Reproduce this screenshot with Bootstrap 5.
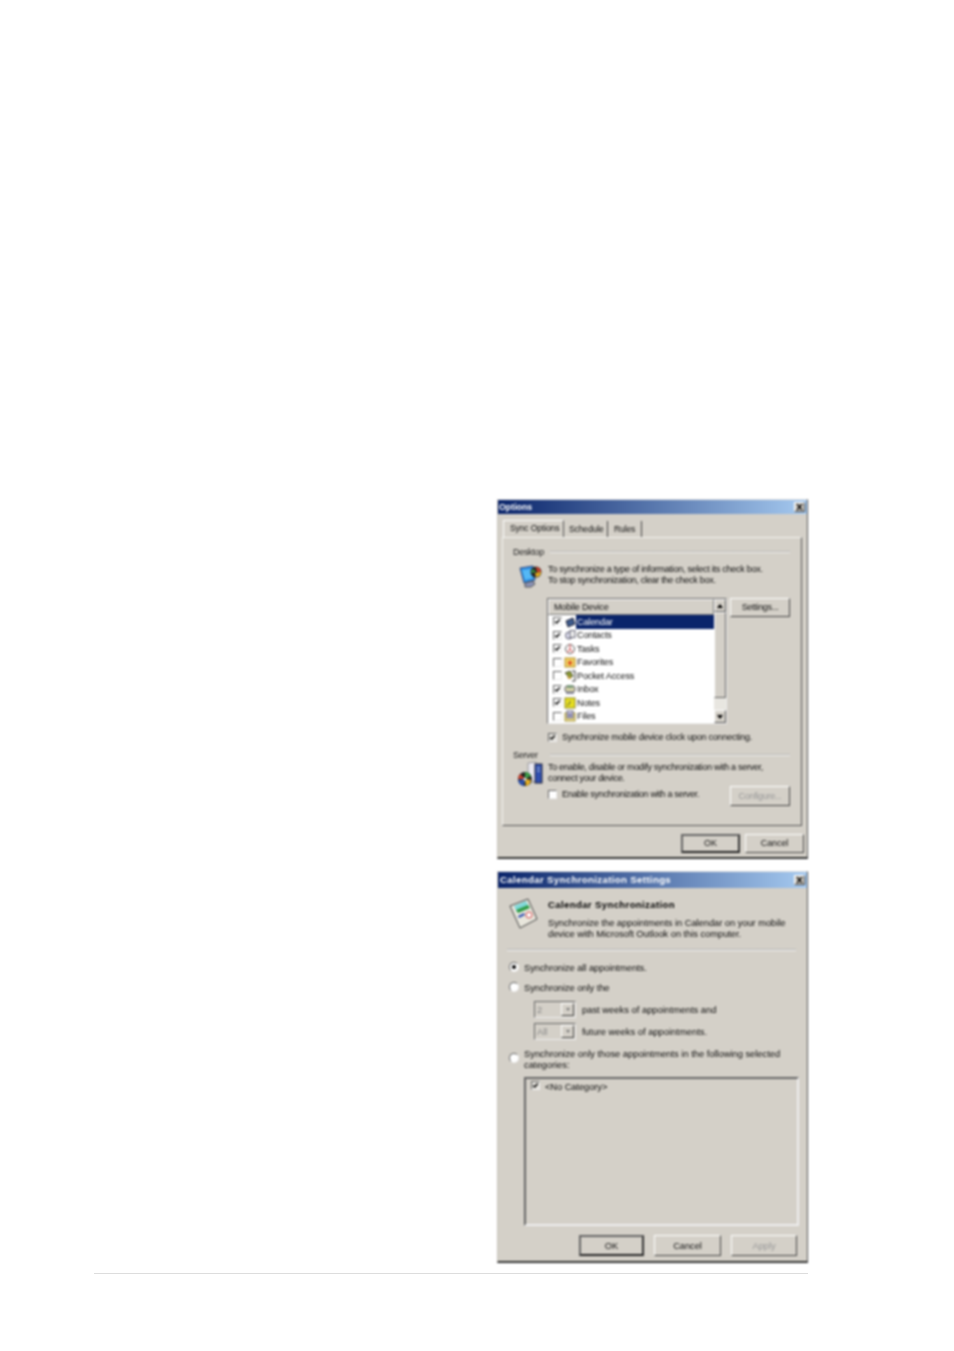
<!DOCTYPE html>
<html lang="en">
<head>
<meta charset="utf-8">
<title>Options</title>
<link href="https://cdn.jsdelivr.net/npm/bootstrap@5.3.0/dist/css/bootstrap.min.css" rel="stylesheet">
<style>
html,body{background:#fff;margin:0}
.sheet{padding:499px 0 0 94px;width:954px;height:1351px}
.dlg-stack{margin-left:403px;width:311px}
.dlg{width:311px;background:#d4d0c8;border-top:1px solid #ddd;border-left:1px solid #c8c4bc;border-right:1px solid #555;border-bottom:2px solid #333;font:9px/11px "Liberation Sans",Arial,sans-serif;color:#0c0c0c;filter:blur(.8px);overflow:hidden}
.dlg-a{height:360px}
.dlg-b{height:392px;margin-top:12px;font-size:9.4px}
.ttl{height:14px;background:linear-gradient(90deg,#0a246a,#a6caf0);color:#fff;font-weight:700;font-size:8.8px;line-height:14px;padding-left:1px;margin:0}
.dlg-b .ttl{height:16px;line-height:18px;font-size:9.6px;padding-left:2px;letter-spacing:.37px}
.xbtn{width:11px;height:10px;background:#d4d0c8;border:1px solid;border-color:#fff #444 #444 #fff;margin-right:2px;display:flex}
.xbtn svg{width:100%;height:100%}
.tabs{margin:6px 0 0 5px;height:17px;gap:1px;font-size:8.6px}
.tabx{padding:3px 4px 0;border-right:1px solid #444;letter-spacing:-.15px;height:16px;margin-top:1px;line-height:11px}
.tabx.on{height:17px;margin-top:0;padding:2px 4px 0 6px;border-right:1px solid #555;border-left:1px solid #fff;border-top:1px solid #fff;width:61px;white-space:nowrap}
.tabx.s1{width:43px}.tabx.s2{padding-left:5px;width:33px}
.panel{margin-left:4px;width:300px;height:289px;border:1px solid;border-color:#f4f4f0 #555 #555 #f4f4f0;padding-top:9px;position:relative}
.grp{height:10px;padding-left:10px;align-items:center;color:#222}
.grp span{width:37px;letter-spacing:-.3px}
.grp i{display:block;width:240px;height:2px;background:linear-gradient(#aaa 50%,#fff 50%);opacity:.7}
.intro{margin-top:7px;padding-left:14px}
.intro svg{width:26px;height:26px;flex:none;margin-top:0}
.intro p{margin:0 0 0 5px;white-space:nowrap;letter-spacing:-.25px;line-height:11px}
.listwrap{margin:8px 0 0 44px}
.lv{width:180px;height:126px;border:1px solid;border-color:#666 #eee #eee #666;background:#fff;overflow:hidden}
.lvmain{width:166px}
.lvhead{height:16px;background:#d4d0c8;border:1px solid;border-color:#fff #777 #777 #fff;padding-left:5px;line-height:14px;letter-spacing:-.15px}
.lvrow{height:13.5px;align-items:center;padding-left:5px;white-space:nowrap;letter-spacing:-.1px}
.lvrow svg{width:12px;height:12px;flex:none;margin-left:2px}
.spacer-row{padding-left:16px}
.cbx{width:9px;height:9px;flex:none;border:1px solid;border-color:#666 #eee #eee #666;background:#fff;display:block}
.cbx svg{display:block;width:100%;height:100%;margin:0}
.lbl{padding:0 1px;height:14px;line-height:14px;flex:1}
.lbl.sel{background:#0a246a;color:#fff}
.sbar{width:12px;background:#e8e6e0;position:relative}
.sbtn{height:13px;background:#d4d0c8;border:1px solid;border-color:#fff #555 #555 #fff;display:flex;align-items:center;justify-content:center;flex:none}
.thumb{height:86px;background:#d4d0c8;border:1px solid;border-color:#fff #666 #666 #fff;flex:none}
.arr{width:0;height:0;border-left:3px solid transparent;border-right:3px solid transparent}
.arr.up{border-bottom:4px solid #000}.arr.dn{border-top:4px solid #000}
.wbtn{background:#d4d0c8;border:1px solid;border-color:#fff #444 #444 #fff;display:flex;align-items:center;justify-content:center;flex:none;letter-spacing:-.1px;color:#111}
.wbtn.def{border:2px solid;border-color:#666 #333 #222 #666}
.wbtn.off{color:#999}
.setbtn{width:60px;height:19px;margin-left:3px;letter-spacing:-.3px}
.chkline{margin:9px 0 0 45px;height:9px;align-items:center;white-space:nowrap;letter-spacing:-.23px}
.chkline span{margin-left:5px}
.chkline .cbx{background:#e4e2dc}
.chkline .cbx.wh{background:#fff}
.srvgrp{margin-top:8px;height:10px}
.srvtxt{margin-top:2px}
.srvtxt p{letter-spacing:-.3px}
.srvtxt svg{margin-top:-1px}
.srvlow{margin:-1px 0 0 45px;justify-content:space-between;align-items:center;width:242px;white-space:nowrap;letter-spacing:-.31px}
.srvlow .wbtn{width:60px;height:20px;letter-spacing:-.3px}
.srvlow .lft{display:flex;align-items:center;margin-top:-3px}
.srvlow span{margin-left:5px}
.acts{justify-content:flex-end;gap:5px;margin:8px 3px 0 0}
.acts .wbtn{width:59px;height:19px}
.hdr{padding:11px 0 0 10px;height:61px}
.hdr svg{width:32px;height:34px;flex:none;margin-top:-2px}
.hdr h6{font:700 9.6px/12px "Liberation Sans",Arial,sans-serif;margin:0 0 6px;color:#000;letter-spacing:.36px}
.hdr p{margin:0;line-height:11px;white-space:nowrap;letter-spacing:-.06px}
.hdr .tx{margin-left:8px}
.sep{margin:0 0 0 9px;width:289px;height:2px;background:linear-gradient(#aaa 50%,#fff 50%);opacity:.8}
.rad{width:10px;height:10px;border-radius:50%;flex:none;background:#fff;border:1px solid;border-color:#666 #eee #eee #666;display:flex;align-items:center;justify-content:center}
.rad b{width:4px;height:4px;border-radius:50%;background:#000;display:block}
.rline{padding-left:11px;align-items:center;white-space:nowrap;letter-spacing:-.08px;height:12px}
.rline span{margin-left:5px}
.r1{margin-top:10px}.r2{margin-top:8px}
.wk{margin:8px 0 0 36px;height:17px;align-items:center;letter-spacing:0}
.wk2{margin-top:5px}
.combo{width:42px;height:17px;border:1px solid;border-color:#666 #eee #eee #666;background:#d4d0c8;align-items:center;padding-left:2px;color:#888;justify-content:space-between;margin-right:6px}
.combo em{font-style:normal}
.combo .wbtn{width:13px;height:13px;margin-right:1px}
.combo .arr{border-left-width:2.5px;border-right-width:2.5px;border-top-width:3px;border-top-color:#777}
.r3{margin-top:8px;padding-left:11px;letter-spacing:-.03px;align-items:center}
.r3 .rad{margin-top:-3px}
.r3 p{margin:0 0 0 5px;line-height:11px;width:265px}
.catbox{margin:7px 0 0 26px;width:275px;height:149px;border:2px solid;border-color:#666 #eee #eee #666;padding:2px 5px;align-items:flex-start;letter-spacing:-.1px}
.catbox .cbx{background:#e4e2dc;margin-top:1px}
.catbox span{margin-left:5px}
.acts2{gap:10px;margin:9px 10px 0 0;justify-content:flex-end}
.acts2 .wbtn{height:21px}
.acts2 .o{width:65px}.acts2 .c{width:67px}.acts2 .a{width:66px}
.foot-rule{height:1px;background:#ddd;width:714px;margin-top:10px}
</style>
</head>
<body>
<div class="sheet">
<div class="dlg-stack">
<section class="dlg dlg-a">
  <div class="ttl d-flex align-items-center justify-content-between"><span>Options</span><span class="xbtn"><svg viewBox="0 0 9 8"><path d="M2 1l5 6M7 1L2 7" stroke="#000" stroke-width="1.3"/></svg></span></div>
  <div class="tabs d-flex">
    <div class="tabx on">Sync Options</div><div class="tabx s1">Schedule</div><div class="tabx s2">Rules</div>
  </div>
  <div class="panel">
    <div class="grp d-flex"><span>Desktop</span><i></i></div>
    <div class="intro d-flex">
      <svg viewBox="0 0 26 26"><path d="M3 4l13-2 2 14-11 3z" fill="#2a8fe8" stroke="#3a4a78"/><path d="M5 6l9-1 2 9-8 2z" fill="#55b8f5"/><path d="M8 19l8-2 2 3-4 3H8z" fill="#8b93b8" stroke="#555"/><circle cx="19" cy="8" r="5.5" fill="#222"/><path d="M19 3a5 5 0 015 5h-4z" fill="#c7402d"/><path d="M24 8a5 5 0 01-5 5l-1-4z" fill="#e8b020"/><path d="M14 9a5 5 0 012-4l3 3z" fill="#3c9a46"/></svg>
      <p>To synchronize a type of information, select its check box.<br>To stop synchronization, clear the check box.</p>
    </div>
    <div class="listwrap d-flex align-items-start">
      <div class="lv d-flex">
        <div class="lvmain">
          <div class="lvhead">Mobile Device</div>
          <div class="lvrow d-flex"><span class="cbx"><svg viewBox="0 0 9 9"><path d="M1.5 4.5l2 2 4-4.5" fill="none" stroke="#000" stroke-width="1.8"/></svg></span><svg viewBox="0 0 12 12"><path d="M2 5l7-3 2 6-7 3z" fill="#3d5a8c" stroke="#223"/></svg><span class="lbl sel">Calendar</span></div>
          <div class="lvrow d-flex"><span class="cbx"><svg viewBox="0 0 9 9"><path d="M1.5 4.5l2 2 4-4.5" fill="none" stroke="#000" stroke-width="1.8"/></svg></span><svg viewBox="0 0 12 12"><circle cx="5" cy="6.5" r="3.5" fill="#dde" stroke="#556"/><rect x="6" y="1.5" width="5" height="7" fill="#eee" stroke="#667"/></svg><span class="lbl">Contacts</span></div>
          <div class="lvrow d-flex"><span class="cbx"><svg viewBox="0 0 9 9"><path d="M1.5 4.5l2 2 4-4.5" fill="none" stroke="#000" stroke-width="1.8"/></svg></span><svg viewBox="0 0 12 12"><circle cx="6" cy="6" r="4.5" fill="#fff" stroke="#555"/><path d="M6 1v5l3 4M6 6l-3 4" fill="none" stroke="#c44"/></svg><span class="lbl">Tasks</span></div>
          <div class="lvrow d-flex"><span class="cbx"></span><svg viewBox="0 0 12 12"><rect x="1" y="2" width="10" height="9" fill="#f2d060" stroke="#b09030"/><path d="M6 4l1 2h2l-2 1.500.5 2L6 8.500 4.500 9.500l.5-2L3 6h2z" fill="#d8401c"/></svg><span class="lbl">Favorites</span></div>
          <div class="lvrow d-flex"><span class="cbx"></span><svg viewBox="0 0 12 12"><path d="M8 1h3v10H8" fill="none" stroke="#333"/><path d="M1 3l5-2 3 5-3 2z" fill="#8a9a30" stroke="#554"/><path d="M3 6l4 1v2H4z" fill="#c9a040"/></svg><span class="lbl">Pocket Access</span></div>
          <div class="lvrow d-flex"><span class="cbx"><svg viewBox="0 0 9 9"><path d="M1.5 4.5l2 2 4-4.5" fill="none" stroke="#000" stroke-width="1.8"/></svg></span><svg viewBox="0 0 12 12"><rect x="1" y="3" width="10" height="6" rx="2" fill="#d8d4a8" stroke="#556"/><path d="M3 2h6v3H3z" fill="#7c9a7c"/><path d="M2 9h8v2H2z" fill="#889"/></svg><span class="lbl">Inbox</span></div>
          <div class="lvrow d-flex"><span class="cbx"><svg viewBox="0 0 9 9"><path d="M1.5 4.5l2 2 4-4.5" fill="none" stroke="#000" stroke-width="1.8"/></svg></span><svg viewBox="0 0 12 12"><rect x="1" y="1" width="10" height="10" fill="#e8e020" stroke="#8a8420"/><path d="M3 8c2 0 3-1 3-4" fill="none" stroke="#554"/></svg><span class="lbl">Notes</span></div>
          <div class="lvrow d-flex"><span class="cbx"></span><svg viewBox="0 0 12 12"><rect x="1" y="3" width="10" height="8" fill="#f0e08a" stroke="#a09040"/><rect x="3" y="1" width="6" height="7" fill="#dcd8f0" stroke="#667"/><path d="M4 4h4M4 6h4" stroke="#447"/></svg><span class="lbl">Files</span></div>
          <div class="lvrow d-flex spacer-row"><svg viewBox="0 0 12 12"><rect x="3" y="0" width="6" height="12" fill="#3c9a46"/></svg></div>
        </div>
        <div class="sbar d-flex flex-column">
          <div class="sbtn"><i class="arr up"></i></div>
          <div class="thumb"></div>
          <div class="flex-grow-1"></div>
          <div class="sbtn"><i class="arr dn"></i></div>
        </div>
      </div>
      <div class="wbtn setbtn">Settings...</div>
    </div>
    <div class="chkline d-flex"><span class="cbx m-0"><svg viewBox="0 0 9 9"><path d="M1.5 4.500l2 2 4-4.500" fill="none" stroke="#000" stroke-width="1.800"/></svg></span><span>Synchronize mobile device clock upon connecting.</span></div>
    <div class="grp d-flex srvgrp"><span>Server</span><i></i></div>
    <div class="srvtxt d-flex intro">
      <svg viewBox="0 0 26 26"><path d="M11 2l8-1v19l-8 2z" fill="#e9e8f2" stroke="#999"/><rect x="18" y="3" width="7" height="19" fill="#2f4fb0" stroke="#223"/><path d="M20 7h3M20 10h3" stroke="#bcd"/><circle cx="8" cy="18" r="7" fill="#222"/><path d="M8 11a7 7 0 016 4l-6 3z" fill="#3c9a46"/><path d="M1 18a7 7 0 012-5l5 5z" fill="#c7402d"/><path d="M8 18l6 1a7 7 0 01-5 6z" fill="#e8b020"/><path d="M8 18l-1 7a7 7 0 01-6-6z" fill="#2c50a8"/><circle cx="8" cy="18" r="1.500" fill="#eee"/></svg>
      <p>To enable, disable or modify synchronization with a server,<br>connect your device.</p>
    </div>
    <div class="srvlow d-flex">
      <div class="lft"><span class="cbx wh m-0"></span><span>Enable synchronization with a server.</span></div>
      <div class="wbtn off">Configure...</div>
    </div>
  </div>
  <div class="acts d-flex"><div class="wbtn def">OK</div><div class="wbtn">Cancel</div></div>
</section>

<section class="dlg dlg-b">
  <div class="ttl d-flex align-items-center justify-content-between"><span>Calendar Synchronization Settings</span><span class="xbtn"><svg viewBox="0 0 9 8"><path d="M2 1l5 6M7 1L2 7" stroke="#000" stroke-width="1.300"/></svg></span></div>
  <div class="hdr d-flex">
    <svg viewBox="0 0 32 34"><path d="M2 9L20 2l9 20-17 9z" fill="#e8e6dc" stroke="#444"/><path d="M6 9l12-5 3 6-12 5z" fill="#7fd8d8"/><path d="M8 13l12-5 2 3-12 5z" fill="#2d9a44"/><path d="M10 19l6-3 1 2-6 3z" fill="#3050b0"/><circle cx="21" cy="18" r="3" fill="#fff" stroke="#d04040"/></svg>
    <div class="tx"><h6>Calendar Synchronization</h6><p>Synchronize the appointments in Calendar on your mobile<br>device with Microsoft Outlook on this computer.</p></div>
  </div>
  <div class="sep"></div>
  <div class="rline r1 d-flex"><i class="rad"><b></b></i><span>Synchronize all appointments.</span></div>
  <div class="rline r2 d-flex"><i class="rad"></i><span>Synchronize only the</span></div>
  <div class="wk d-flex"><div class="combo d-flex"><em>2</em><div class="wbtn"><i class="arr dn"></i></div></div><span>past weeks of appointments and</span></div>
  <div class="wk wk2 d-flex"><div class="combo d-flex"><em>All</em><div class="wbtn"><i class="arr dn"></i></div></div><span>future weeks of appointments.</span></div>
  <div class="r3 d-flex"><i class="rad"></i><p>Synchronize only those appointments in the following selected categories:</p></div>
  <div class="catbox d-flex"><span class="cbx m-0"><svg viewBox="0 0 9 9"><path d="M1.500 4.500l2 2 4-4.500" fill="none" stroke="#000" stroke-width="1.800"/></svg></span><span>&lt;No Category&gt;</span></div>
  <div class="acts2 d-flex"><div class="wbtn def o">OK</div><div class="wbtn c">Cancel</div><div class="wbtn off a">Apply</div></div>
</section>
</div>
<div class="foot-rule"></div>
</div>
</body>
</html>
